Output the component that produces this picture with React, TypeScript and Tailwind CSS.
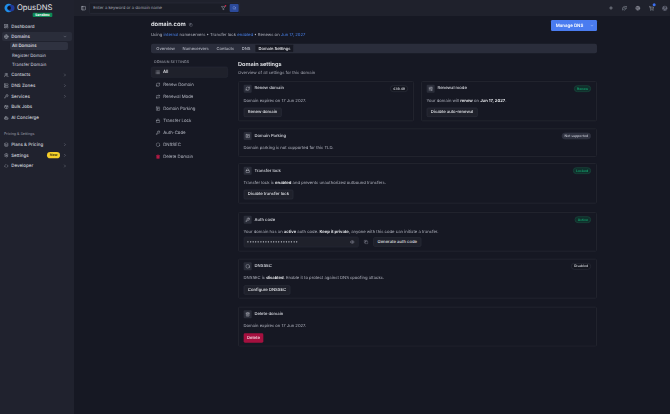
import {
  ChevronDown, ChevronRight, Code, Copy, Eye, Filter, Globe, KeyRound, Layers, LayoutDashboard, Lock, PanelLeft, Plus, Puzzle,
  Hexagon, RefreshCw, Search, Server, Settings, ShoppingCart, SlidersHorizontal, SquareParking, Trash2, User, Users, Wrench, Bot, Repeat, Package, List,
} from 'lucide-react'
import type { ReactNode } from 'react'

// the page is laid out at 2010x1242 and shrunk to the 670x414 window
const navTop = [
  { label: 'Contacts', icon: Users, chevron: true },
  { label: 'DNS Zones', icon: Server, chevron: true },
  { label: 'Services', icon: Wrench, chevron: true },
  { label: 'Bulk Jobs', icon: Package },
  { label: 'AI Concierge', icon: Bot },
]

const settingsNav = [
  { label: 'Renew Domain', icon: RefreshCw },
  { label: 'Renewal Mode', icon: Repeat },
  { label: 'Domain Parking', icon: SquareParking },
  { label: 'Transfer Lock', icon: Lock },
  { label: 'Auth-Code', icon: KeyRound },
  { label: 'DNSSEC', icon: Hexagon },
]

function NavRow({ icon: Icon, label, chevron, badge }: { icon: typeof Globe; label: string; chevron?: boolean; badge?: boolean }) {
  return (
    <div className="flex h-[32.1px] items-center pl-[12px] pr-[21px] text-[13.5px] font-medium text-[#cdd0d9]">
      <Icon strokeWidth={2.5} className="mr-[7.5px] h-[14px] w-[14px] text-[#a6a9b5]" />
      <span>{label}</span>
      {badge && <span className="ml-auto rounded-full bg-[#f5cf2a] px-[8px] py-[1.5px] text-[10.5px] leading-[16px] font-semibold text-[#3a3208]">New</span>}
      {chevron && <ChevronRight strokeWidth={2.5} className={`h-[12px] w-[12px] text-[#8d909c] ${badge ? 'ml-[9px]' : 'ml-auto'}`} />}
    </div>
  )
}

function Sidebar() {
  return (
    <aside className="flex w-[222px] shrink-0 flex-col bg-[#20222e]">
      <div className="flex h-[63px] items-start pl-[9px] pt-[9px]">
        <svg viewBox="0 0 24 24" className="h-[30px] w-[39px]">
          <circle cx="10" cy="12" r="10" fill="#1f8fe8" />
          <circle cx="16" cy="12" r="8" fill="#1e3a9a" />
          <circle cx="11" cy="12" r="4.5" fill="#0d1220" />
        </svg>
        <div className="ml-[3px] flex flex-col items-end">
          <span className="text-[23px] leading-[28.5px] font-normal text-[#e4e6ec]">OpusDNS</span>
          <span className="rounded-[3px] bg-[#0d8a56] px-[7.5px] text-[10.5px] leading-[13.5px] font-semibold text-white">Sandbox</span>
        </div>
      </div>
      <NavRow icon={LayoutDashboard} label="Dashboard" />
      <div className="mx-[6px] mt-[1px] flex h-[27px] items-center rounded-[6px] bg-[#2a2d3a] pl-[6px] pr-[15px] text-[13.5px] font-medium text-[#dcdee5]">
        <Globe strokeWidth={2.5} className="mr-[7.5px] h-[14px] w-[14px] text-[#a6a9b5]" />
        Domains
        <ChevronDown strokeWidth={2.5} className="ml-auto h-[12px] w-[12px] text-[#8d909c]" />
      </div>
      <div className="ml-[30px] mr-[18px] mt-[3px] flex flex-col text-[13px] font-medium text-[#bcbfca]">
        <div className="flex h-[24px] items-center rounded-[6px] bg-[#2f3240] px-[6px] text-[#e2e4ea]">All Domains</div>
        <div className="flex h-[30px] items-center px-[6px] pt-[6px]">Register Domain</div>
        <div className="flex h-[27px] items-center px-[6px]">Transfer Domain</div>
      </div>
      <div className="mt-[2px]">
        {navTop.map(item => <NavRow key={item.label} {...item} />)}
      </div>
      <div className="mt-[18px] flex h-[30px] items-center pl-[12px] text-[11px] text-[#9a9da9]">Pricing &amp; Settings</div>
      <NavRow icon={Layers} label="Plans & Pricing" chevron />
      <NavRow icon={Settings} label="Settings" chevron badge />
      <NavRow icon={Code} label="Developer" chevron />
    </aside>
  )
}

function TopBar() {
  return (
    <header className="flex h-[48px] shrink-0 items-center bg-[#1f212c] pl-[21px] pr-[8px] text-[#a4a7b2]">
      <PanelLeft strokeWidth={2.5} className="h-[15px] w-[15px] text-[#b4b7c1]" />
      <div className="ml-[9px] flex h-[33px] w-[453px] items-center rounded-[4px] border-[2px] border-[#2a2d39] bg-[#1b1d27] pl-[11px] pr-[2px] text-[12.6px] text-[#acafba]">
        Enter a keyword or a domain name
        <span className="relative ml-auto mr-[12px]">
          <Filter strokeWidth={2.5} className="h-[14px] w-[14px] text-[#b4b7c1]" />
          <span className="absolute -right-[2px] -top-[2px] h-[5px] w-[5px] rounded-full bg-[#e11d48]" />
        </span>
        <span className="flex h-[24px] w-[27px] items-center justify-center rounded-[3px] bg-[#2c4a9a]">
          <Search strokeWidth={2.5} className="h-[12px] w-[12px] text-[#8fa8e8]" />
        </span>
      </div>
      <div className="ml-auto flex items-center gap-[25.5px]">
        <Plus strokeWidth={3} className="h-[14px] w-[14px]" />
        <Puzzle strokeWidth={2.5} className="h-[15px] w-[15px]" />
        <Globe strokeWidth={2.5} className="h-[15px] w-[15px]" />
        <span className="relative">
          <ShoppingCart strokeWidth={2.5} className="h-[15px] w-[15px]" />
          <span className="absolute -right-[5px] -top-[7px] h-[9px] w-[9px] rounded-full bg-[#3b6ff0]" />
        </span>
        <User strokeWidth={2.5} className="h-[15px] w-[15px] rounded-full bg-[#6a6d7e] text-[#22242f]" />
      </div>
    </header>
  )
}

function Tabs() {
  const tabs = ['Overview', 'Nameservers', 'Contacts', 'DNS']
  return (
    <div className="mt-[18px] flex h-[29px] items-center rounded-[6px] bg-[#2a2d3b] pl-[4.5px] text-[12.3px] font-medium text-[#b2b5c0]">
      {tabs.map(t => <span key={t} className="px-[11.5px]">{t}</span>)}
      <span className="ml-[1.5px] rounded-[4px] border-[2px] border-[#2f3240] bg-[#171923] px-[9px] py-[2px] text-[#e8e9ee]">Domain Settings</span>
    </div>
  )
}

function Badge({ tone, children }: { tone: 'green' | 'gray' | 'dark'; children: ReactNode }) {
  const cls = {
    green: 'bg-[#10302c] text-[#14b478] border-[#1a4a3e]',
    gray: 'bg-[#2f3240] text-[#c8cbd5] border-[#2f3240]',
    dark: 'bg-[#14161f] text-[#dcdee5] border-[#2c2f3b]',
  }[tone]
  return <span className={`ml-auto rounded-full border-[2px] px-[7px] py-[1px] text-[10.2px] leading-[14px] font-medium ${cls}`}>{children}</span>
}

function Btn({ children }: { children: ReactNode }) {
  return <span className="inline-flex h-[28.5px] items-center rounded-[4px] border-[2px] border-[#2c2f3b] bg-[#1f212b] px-[11px] text-[12.6px] font-medium text-[#e4e6eb]">{children}</span>
}

function Card({ icon: Icon, title, badge, className, children }: { icon: typeof Globe; title: string; badge?: ReactNode; className?: string; children: ReactNode }) {
  return (
    <section className={`rounded-[4px] border-[3px] border-[#22242e] px-[13.5px] pt-[8px] ${className ?? ''}`}>
      <div className="flex items-center pr-[1.5px] text-[12.6px] font-medium text-[#dcdee5]">
        <span className="mr-[9px] flex h-[24px] w-[24px] items-center justify-center rounded-[3px] bg-[#2a2d39]">
          <Icon strokeWidth={2.5} className="h-[14px] w-[14px] text-[#b6b9c3]" />
        </span>
        {title}
        {badge}
      </div>
      <div className="mt-[16px] text-[12.6px] leading-[16.5px] text-[#b2b5c0]">{children}</div>
    </section>
  )
}

const B = ({ children }: { children: ReactNode }) => <span className="font-semibold text-[#eceef2]">{children}</span>

function DomainSettings() {
  return (
    <div className="mt-[21px] flex">
      <nav className="w-[231px] shrink-0">
        <div className="flex h-[12px] items-center pl-[9px] text-[10.8px] font-medium tracking-[0.3px] text-[#9a9da9]">DOMAIN SETTINGS</div>
        <div className="mt-[7.5px] flex h-[33px] items-center rounded-[6px] border-[2px] border-[#262935] bg-[#1f212b] pl-[11px] text-[13px] font-medium text-[#e8e9ee]">
          <List strokeWidth={2.5} className="mr-[9px] h-[14px] w-[14px] text-[#b6b9c3]" />All
        </div>
        <div className="mt-[3px]">
          {settingsNav.map(({ label, icon: Icon }) => (
            <div key={label} className="flex h-[36px] items-center pl-[13.5px] text-[13px] text-[#b2b5c0]">
              <Icon strokeWidth={2.5} className="mr-[9px] h-[14px] w-[14px] text-[#a0a3ae]" />{label}
            </div>
          ))}
          <div className="flex h-[36px] items-center pl-[13.5px] text-[13px] text-[#b2b5c0]">
            <Trash2 className="mr-[9px] h-[14px] w-[14px] fill-[#b01c45] text-[#b01c45]" />Delete Domain
          </div>
        </div>
      </nav>
      <div className="ml-[30px] flex min-w-0 flex-1 flex-col">
        <h2 className="text-[16.8px] leading-[24px] font-semibold text-[#eceef2]">Domain settings</h2>
        <p className="mt-[5.4px] text-[12.6px] leading-[18px] text-[#a4a7b2]">Overview of all settings for this domain</p>
        <div className="mt-[15px] flex gap-[21px]">
          <Card icon={RefreshCw} title="Renew domain" className="h-[121.5px] flex-1" badge={<Badge tone="dark">€39.49</Badge>}>
            <p>Domain expires on 17 Jun 2027.</p>
            <div className="mt-[12.5px]"><Btn>Renew domain</Btn></div>
          </Card>
          <Card icon={SlidersHorizontal} title="Renewal mode" className="h-[121.5px] flex-1" badge={<Badge tone="green">Renew</Badge>}>
            <p>Your domain will <B>renew</B> on <B>Jun 17, 2027</B>.</p>
            <div className="mt-[12.5px]"><Btn>Disable auto-renewal</Btn></div>
          </Card>
        </div>
        <Card icon={SquareParking} title="Domain Parking" className="mt-[21px] h-[85.5px]" badge={<Badge tone="gray">Not supported</Badge>}>
          <p>Domain parking is not supported for this TLD.</p>
        </Card>
        <Card icon={Lock} title="Transfer lock" className="mt-[18.6px] h-[121.5px]" badge={<Badge tone="green">Locked</Badge>}>
          <p>Transfer lock is <B>enabled</B> and prevents unauthorized outbound transfers.</p>
          <div className="mt-[12.5px]"><Btn>Disable transfer lock</Btn></div>
        </Card>
        <Card icon={KeyRound} title="Auth code" className="mt-[25.5px] h-[118.5px]" badge={<Badge tone="green">Active</Badge>}>
          <p>Your domain has an <B>active</B> auth code. <B>Keep it private</B>, anyone with this code can initiate a transfer.</p>
          <div className="mt-[6.5px] flex items-center">
            <div className="flex h-[31.5px] w-[345px] items-center rounded-[4px] border-[2px] border-[#262935] bg-[#1f212b] pl-[8px] pr-[9.5px] tracking-[0.6px] text-[#cdd0d9]">
              ••••••••••••••••••••
              <Eye strokeWidth={2.5} className="ml-auto h-[14px] w-[14px] text-[#8f92a0]" />
            </div>
            <Copy strokeWidth={2.5} className="ml-[15px] h-[14px] w-[14px] text-[#8f92a0]" />
            <span className="ml-[15px]"><Btn>Generate auth code</Btn></span>
          </div>
        </Card>
        <Card icon={Hexagon} title="DNSSEC" className="mt-[21px] h-[120px]" badge={<Badge tone="dark">Disabled</Badge>}>
          <p>DNSSEC is <B>disabled</B>. Enable it to protect against DNS spoofing attacks.</p>
          <div className="mt-[12.5px]"><Btn>Configure DNSSEC</Btn></div>
        </Card>
        <Card icon={Trash2} title="Delete domain" className="mt-[24px] h-[120px]">
          <p>Domain expires on 17 Jun 2027.</p>
          <span className="mt-[12.5px] inline-flex h-[28.5px] items-center rounded-[4px] bg-[#a5103f] px-[10.5px] font-medium text-[#f8e3ea]">Delete</span>
        </Card>
      </div>
    </div>
  )
}

export default function App() {
  return (
    <div className="h-[414px] w-[670px] overflow-hidden bg-[#161823] blur-[0.2px]">
      <div className="flex h-[1242px] w-[2010px] origin-top-left scale-[0.33333] font-['Inter',sans-serif] [text-rendering:geometricPrecision]">
        <Sidebar />
        <div className="flex min-w-0 flex-1 flex-col">
          <TopBar />
          <main className="pl-[231px] pr-[219px] pt-[12px]">
            <div className="flex items-start">
              <div>
                <div className="flex items-center text-[17.4px] leading-[27px] font-semibold text-[#eceef2]">
                  domain.com
                  <Copy strokeWidth={2.5} className="ml-[9px] h-[12px] w-[12px] text-[#8f92a0]" />
                </div>
                <p className="mt-[7.5px] text-[12.6px] leading-[18px] text-[#b2b5c0]">
                  Using <span className="text-[#4a84f0]">internal</span> nameservers • Transfer lock <span className="text-[#4a84f0]">enabled</span> • Renews on <span className="text-[#4a84f0]">Jun 17, 2027</span>
                </p>
              </div>
              <div className="ml-auto flex h-[33px] w-[138px] shrink-0 items-center rounded-[4px] bg-[#4a7cf0] pl-[14px] pr-[9px] text-[13.2px] font-semibold text-white">
                Manage DNS
                <ChevronDown strokeWidth={2.5} className="ml-auto h-[12px] w-[12px] shrink-0 text-[#c9d8fb]" />
              </div>
            </div>
            <Tabs />
            <DomainSettings />
          </main>
        </div>
      </div>
    </div>
  )
}
